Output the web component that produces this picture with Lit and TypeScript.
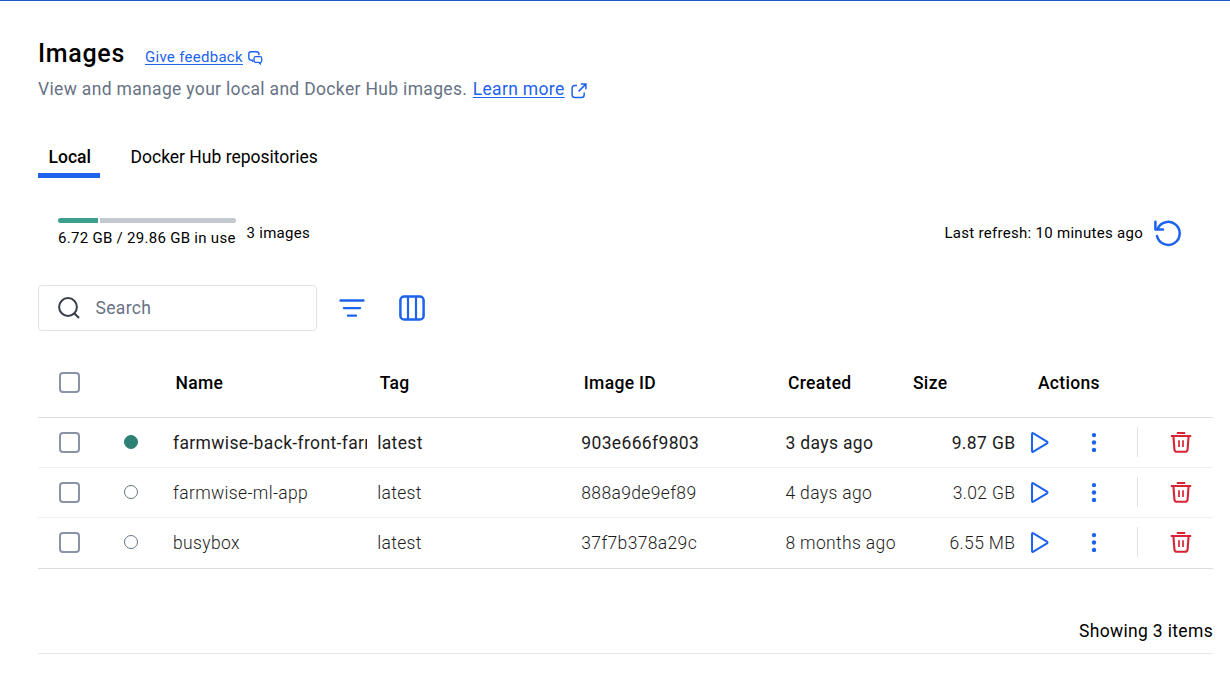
import { LitElement, html, css, svg, nothing } from "lit";
import { customElement, property } from "lit/decorators.js";

interface ImageRow {
  name: string;
  tag: string;
  id: string;
  created: string;
  size: string;
  inUse: boolean;
}

const ROWS: ImageRow[] = [
  { name: "farmwise-back-front-farm", tag: "latest", id: "903e666f9803", created: "3 days ago", size: "9.87 GB", inUse: true },
  { name: "farmwise-ml-app", tag: "latest", id: "888a9de9ef89", created: "4 days ago", size: "3.02 GB", inUse: false },
  { name: "busybox", tag: "latest", id: "37f7b378a29c", created: "8 months ago", size: "6.55 MB", inUse: false },
];

const HEADERS = ["Name", "Tag", "Image ID", "Created", "Size", "Actions"];

const GLYPHS: Record<string, { w: number; h: number; body: unknown }> = {
  feedback: {
    w: 15, h: 14,
    body: svg`<path d="M4.6 11V9.3C1.6 9.3.8 8.3.8 6.8V3C.8 1.5 1.5.8 3 .8H8.6C10.1.8 10.9 1.5 10.9 3V4.2" stroke-width="1.4"/><path d="M7.6 5.7H12.1C13.3 5.7 13.8 6.2 13.8 7.4V9.6C13.8 10.8 13.3 11.3 12.4 11.3V12.9L10.6 11.3H7.6C6.5 11.3 6 10.8 6 9.6V7.4C6 6.2 6.5 5.7 7.6 5.7Z" stroke-width="1.3"/>`,
  },
  external: {
    w: 16, h: 16,
    body: svg`<path d="M6 2.4H3.9C1.9 2.4 1.1 3.2 1.1 5.2V11.7C1.1 13.7 1.9 14.5 3.9 14.5H10.4C12.4 14.5 13.2 13.7 13.2 11.7V9.4M9.8 1.1H14.9V6.2M14.6 1.4L7.6 8.4" stroke-width="1.5"/>`,
  },
  refresh: {
    w: 28, h: 28,
    body: svg`<path d="M3 17A11.5 11.5 0 1 0 3.6 9.9M1.4 2.8V10.4H9" stroke-width="2.5" stroke-linecap="round" stroke-linejoin="round"/>`,
  },
  search: {
    w: 23, h: 23,
    body: svg`<circle cx="10" cy="10" r="8.9" stroke-width="2"/><path d="M16.2 16.2L21 21" stroke-width="2"/>`,
  },
  filter: {
    w: 26, h: 20,
    body: svg`<path d="M1.5 2.5H24.5M5 10.1H21M9 17.6H17" stroke-width="2.4" stroke-linecap="round"/>`,
  },
  columns: {
    w: 26, h: 26,
    body: svg`<rect x="1.4" y="1.4" width="23.2" height="23.2" rx="3.8" stroke-width="2.5"/><path d="M9 1.5V24.5M17 1.5V24.5" stroke-width="2.2"/>`,
  },
  play: {
    w: 20, h: 24,
    body: svg`<path d="M2 4.1V20.9C2 21.8 2.7 22.2 3.4 21.7L17 13.4C17.7 12.9 17.7 12.1 17 11.6L3.4 3.3C2.7 2.8 2 3.2 2 4.1Z" stroke-width="2" stroke-linejoin="round"/>`,
  },
  more: {
    w: 6, h: 20,
    body: svg`<g fill="currentColor" stroke="none"><circle cx="3" cy="3.1" r="2.2"/><circle cx="3" cy="10.5" r="2.2"/><circle cx="3" cy="17.9" r="2.2"/></g>`,
  },
  trash: {
    w: 22, h: 22,
    body: svg`<path d="M6.8 2H15.2M.8 5.1H21.2" stroke-width="2"/><path d="M3.4 5.2L4.4 18.3C4.6 20 5.4 20.8 7 20.8H15C16.6 20.8 17.4 20 17.6 18.3L18.6 5.2" stroke-width="2.1"/><path d="M9 9.2V16M13 9.2V16" stroke-width="1.7"/>`,
  },
};

@customElement("ui-glyph")
class UiGlyph extends LitElement {
  @property() name = "";
  static styles = css`
    :host { display: inline-flex; flex: none; }
    svg { display: block; }
  `;
  render() {
    const g = GLYPHS[this.name];
    return g
      ? html`<svg width=${g.w} height=${g.h} viewBox="0 0 ${g.w} ${g.h}" fill="none" stroke="currentColor" aria-hidden="true">${g.body}</svg>`
      : nothing;
  }
}

@customElement("app-root")
class AppRoot extends LitElement {
  static styles = css`
    :host {
      display: block;
      box-sizing: border-box;
      height: 673px;
      overflow: hidden;
      border-top: 1px solid #1c56cf;
      padding: 36px 17px 0 38px;
      background: #fff;
      color: #000;
      font: 400 17.5px/26px Roboto, sans-serif;
      letter-spacing: 0.33px;
    }
    .title-row { display: flex; align-items: baseline; height: 36px; }
    h1 { margin: 0; font-size: 25px; line-height: 34px; font-weight: 500; letter-spacing: 0.7px; }
    a { color: #1d63ed; text-decoration: underline; text-underline-offset: 2px; text-decoration-thickness: 1px; }
    .feedback { display: flex; align-items: center; gap: 5px; margin-left: 20px; font-size: 15px; line-height: 20px; letter-spacing: 0.29px; color: #1d63ed; }
    .feedback ui-glyph { margin-top: 2px; }
    .subtitle { display: flex; align-items: center; height: 32px; color: #677285; }
    .subtitle a { margin-left: 5.5px; }
    .subtitle ui-glyph { margin: 3px 0 0 6px; color: #1d63ed; }
    .tabs { display: flex; gap: 20px; margin-top: 31px; height: 42px; letter-spacing: 0; }
    .tab { padding: 8px 10px 0 10.5px; box-sizing: border-box; }
    .tab.active { border-bottom: 5px solid #1d63ed; font-weight: 500; width: 62px; }
    .status { display: flex; align-items: center; margin-top: 35px; height: 40px; padding-left: 20px; font-size: 15px; line-height: 20px; letter-spacing: 0.29px; }
    .usage { width: 178px; white-space: nowrap; }
    .bar { display: flex; gap: 2px; height: 5px; margin-bottom: 5px; }
    .used { background: #3ba08d; border-radius: 3px 0 0 3px; }
    .free { flex: 1; background: #c4c8d1; border-radius: 0 3px 3px 0; }
    .count { margin-left: 10.5px; }
    .refreshed { margin-left: auto; }
    .status ui-glyph { margin: 0 31px 0 11px; color: #1d63ed; }
    .tools { display: flex; align-items: center; height: 46px; margin-top: 32px; color: #1d63ed; }
    .search { display: flex; align-items: center; box-sizing: border-box; width: 279px; height: 46px; border: 1px solid #e1e2e6; border-radius: 4px; padding-left: 19px; gap: 14.5px; color: #677285; }
    .search ui-glyph { color: #393f49; }
    .filter { margin-left: 22px; }
    .cols { margin-left: 34px; }
    .row { display: grid; grid-template-columns: 62.5px 62.5px 204.15px 204.15px 204.15px 125px 125px 1fr; align-items: center; box-sizing: border-box; height: 50px; border-bottom: 1px solid #f0f0f1; }
    .head { height: 70px; margin-top: 17px; border-bottom-color: #dcdcde; font-weight: 500; }
    .head .label { padding-left: 12.5px; }
    .row:last-child { height: 51px; padding-bottom: 1px; border-bottom: 1px solid #dcdcde; }
    .cell { padding: 0 0 0 10px; overflow: hidden; white-space: nowrap; color: #1c1c1c; font-weight: 300; letter-spacing: 0.35px; }
    .in-use .cell { font-weight: 400; letter-spacing: 0.35px; }
    .in-use .size, .cell.size { text-align: right; padding: 0 10px 0 0; }
    .box { box-sizing: border-box; width: 21px; height: 21px; margin-left: 21px; border: 2px solid #8993a5; border-radius: 4px; }
    .dot { box-sizing: border-box; width: 14px; height: 14px; margin: 0 0 2px 23.5px; border: 1.3px solid #677285; border-radius: 50%; }
    .in-use .dot { background: #2e7f74; border-color: #2e7f74; }
    .actions { display: flex; align-items: center; margin-top: -1px; padding-left: 5px; color: #1d63ed; }
    .more { margin-left: 41px; }
    .divider { width: 1px; height: 30px; margin: 0 32px 0 40px; background: #e1e2e6; }
    .trash { color: #d52536; }
    .footer { display: flex; justify-content: flex-end; align-items: flex-end; height: 85px; box-sizing: border-box; border-bottom: 1px solid #e8e8ea; }
    .footer span { padding-bottom: 9px; }
  `;

  render() {
    return html`
      <div class="title-row">
        <h1>Images</h1>
        <div class="feedback"><a>Give feedback</a><ui-glyph name="feedback"></ui-glyph></div>
      </div>
      <div class="subtitle">
        <span>View and manage your local and Docker Hub images.</span>
        <a>Learn more</a><ui-glyph name="external"></ui-glyph>
      </div>
      <div class="tabs">
        <div class="tab active">Local</div>
        <div class="tab">Docker Hub repositories</div>
      </div>
      <div class="status">
        <div class="usage">
          <div class="bar"><div class="used" style="width:${(6.72 / 29.86) * 178}px"></div><div class="free"></div></div>
          6.72 GB / 29.86 GB in use
        </div>
        <span class="count">3 images</span>
        <span class="refreshed">Last refresh: 10 minutes ago</span>
        <ui-glyph name="refresh"></ui-glyph>
      </div>
      <div class="tools">
        <div class="search"><ui-glyph name="search"></ui-glyph><span>Search</span></div>
        <ui-glyph class="filter" name="filter"></ui-glyph>
        <ui-glyph class="cols" name="columns"></ui-glyph>
      </div>
      <div class="table">
        <div class="row head">
          <div class="box"></div><div></div>
          ${HEADERS.map((h) => html`<div class="label">${h}</div>`)}
        </div>
        ${ROWS.map(
          (r) => html`<div class="row ${r.inUse ? "in-use" : ""}">
            <div class="box"></div>
            <div class="dot"></div>
            <div class="cell">${r.name}</div>
            <div class="cell">${r.tag}</div>
            <div class="cell">${r.id}</div>
            <div class="cell">${r.created}</div>
            <div class="cell size">${r.size}</div>
            <div class="actions">
              <ui-glyph name="play"></ui-glyph>
              <ui-glyph class="more" name="more"></ui-glyph>
              <div class="divider"></div>
              <ui-glyph class="trash" name="trash"></ui-glyph>
            </div>
          </div>`
        )}
      </div>
      <div class="footer"><span>Showing 3 items</span></div>
    `;
  }
}
